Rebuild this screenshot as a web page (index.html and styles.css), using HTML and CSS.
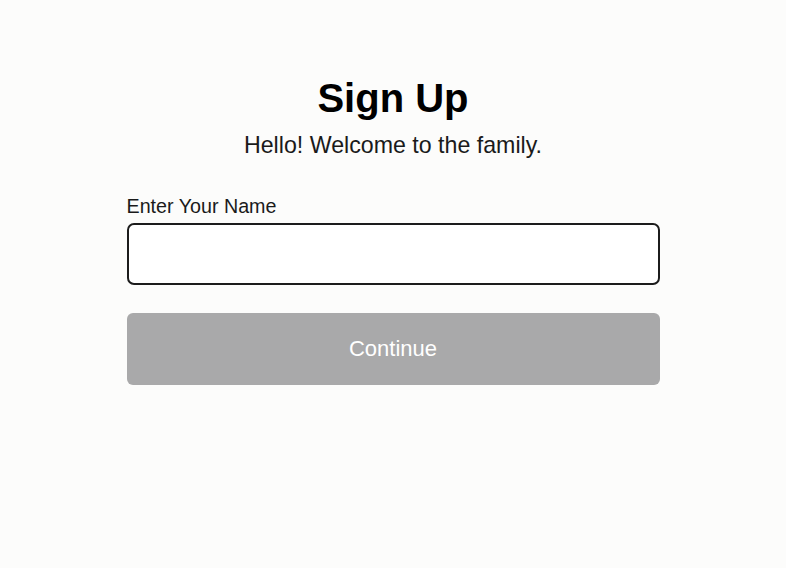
FILE: index.html
```html
<!DOCTYPE html>
<html lang="en">
<head>
<meta charset="utf-8">
<title>Sign Up</title>
<link rel="stylesheet" href="styles.css">
</head>
<body>
<main class="page">
  <header class="intro">
    <h1 class="title">Sign Up</h1>
    <p class="subtitle">Hello! Welcome to the family.</p>
  </header>
  <form class="form">
    <label class="label" for="name">Enter Your Name</label>
    <input class="input" id="name" type="text">
    <button class="button" type="button" disabled>Continue</button>
  </form>
</main>
</body>
</html>
```
FILE: styles.css
```css
* { box-sizing: border-box; }
html, body {
  margin: 0;
  padding: 0;
  background: #fcfcfb;
  font-family: "Liberation Sans", Arial, sans-serif;
  color: #111;
}
.page {
  display: flex;
  flex-direction: column;
  align-items: center;
  padding-top: 74px;
}
.intro {
  display: flex;
  flex-direction: column;
  align-items: center;
}
.title {
  margin: 0;
  font-size: 40px;
  line-height: 48px;
  font-weight: 700;
  color: #000;
}
.subtitle {
  margin: 9px 0 0;
  font-size: 23.2px;
  line-height: 28px;
  color: #1a1a1a;
}
.form {
  width: 533px;
  margin-top: 35px;
  display: flex;
  flex-direction: column;
}
.label {
  font-size: 19.7px;
  line-height: 24px;
  color: #1a1a1a;
}
.input {
  margin-top: 5px;
  height: 62px;
  border: 2px solid #1c1c1c;
  border-radius: 7px;
  background: #fff;
  font: inherit;
  padding: 0 14px;
}
.button {
  margin-top: 28px;
  height: 72px;
  border: none;
  border-radius: 6px;
  background: #a9a9aa;
  color: #fff;
  font-family: "Liberation Sans", Arial, sans-serif;
  font-size: 22px;
}
```
